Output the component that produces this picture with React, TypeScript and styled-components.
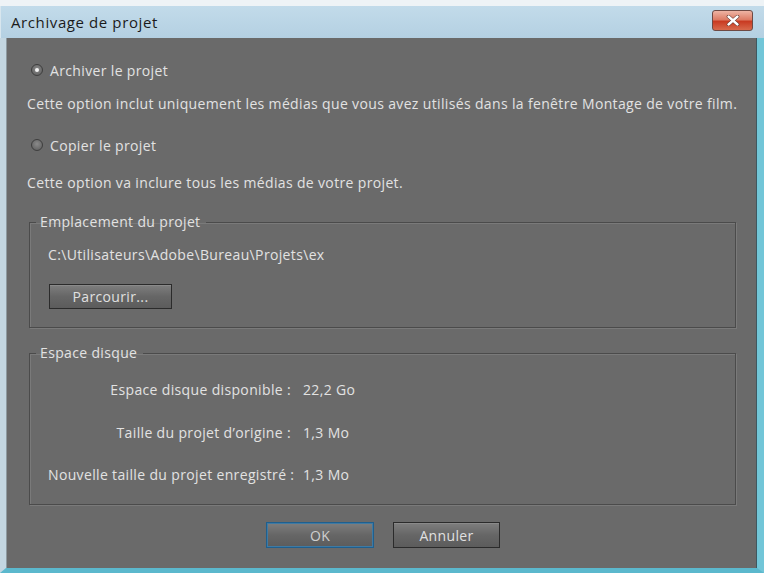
import React from 'react';
import styled, { createGlobalStyle } from 'styled-components';

const GlobalStyle = createGlobalStyle`
  html, body {
    margin: 0;
    padding: 0;
    background: #f2f5f7;
  }
  body {
    font-family: "Open Sans", "Noto Sans", sans-serif;
  }
`;

const Window = styled.div`
  width: 764px;
  height: 573px;
  display: flex;
  flex-direction: column;
  box-sizing: border-box;
  padding-top: 6px;
  background: #eef3f6;
`;

const TitleBar = styled.div`
  height: 32px;
  display: flex;
  align-items: center;
  justify-content: space-between;
  padding: 0 11px 0 10px;
  background: linear-gradient(#c2dbea, #b4d0e2);
  border-left: 1px solid #d8e6ee;
`;

const Title = styled.div`
  font-size: 15px;
  color: #1b1b1b;
  letter-spacing: 0.6px;
`;

const CloseButton = styled.div`
  width: 41px;
  height: 21px;
  box-sizing: border-box;
  border: 1px solid #6e4a44;
  border-radius: 3px;
  background: linear-gradient(#eeb4a4 0%, #dd7d66 45%, #c93b22 55%, #d86a4c 100%);
  display: flex;
  align-items: center;
  justify-content: center;
  margin-top: -4px;
`;

const Body = styled.div`
  flex: 1;
  display: flex;
  flex-direction: column;
  background: #6a6a6a;
  border-left: 6px solid #c3d6e1;
  border-right: 7px solid #72c6d8;
  border-bottom: 5px solid #5bb8cd;
  box-shadow: inset 1px 0 0 #8e9aa0, inset -1px 0 0 #3f5860;
  padding-left: 21px;
  color: #e2e2e2;
  font-size: 14px;
  letter-spacing: 0.35px;
`;

const RadioRow = styled.label<{ $top: number }>`
  display: flex;
  align-items: center;
  gap: 7px;
  height: 20px;
  margin-top: ${p => p.$top}px;
  margin-left: 4px;
`;

const RadioDot = styled.span<{ $checked?: boolean }>`
  width: 12px;
  height: 12px;
  box-sizing: border-box;
  border-radius: 50%;
  border: 1px solid #3e3e3e;
  background: radial-gradient(circle at 50% 40%, #8a8a8a, #5a5a5a);
  display: flex;
  align-items: center;
  justify-content: center;
  &::after {
    content: '';
    display: ${p => (p.$checked ? 'block' : 'none')};
    width: 4px;
    height: 4px;
    border-radius: 50%;
    background: #f4f4f4;
  }
`;

const Text = styled.div<{ $top: number }>`
  height: 20px;
  line-height: 20px;
  margin-top: ${p => p.$top}px;
  white-space: nowrap;
`;

const Group = styled.fieldset<{ $top: number; $bottom: number }>`
  width: 707px;
  box-sizing: border-box;
  margin: ${p => p.$top}px 0 0 2px;
  padding: 0 18px ${p => p.$bottom}px 18px;
  border: 1px solid #4b4b4b;
  box-shadow: 1px 1px 0 #7a7a7a, inset 1px 1px 0 #7a7a7a;
  min-width: 0;
`;

const Legend = styled.legend`
  height: 20px;
  line-height: 20px;
  padding: 0 6px 0 4px;
  margin-left: -12px;
  color: #e2e2e2;
`;

const PathText = styled.div`
  margin-top: 13px;
  height: 20px;
  line-height: 20px;
`;

const Button = styled.button<{ $focused?: boolean; $width: number; $height: number }>`
  width: ${p => p.$width}px;
  height: ${p => p.$height}px;
  box-sizing: border-box;
  border: 1px solid ${p => (p.$focused ? '#1f5f8e' : '#2b2b2b')};
  box-shadow: ${p => (p.$focused ? 'inset 0 0 0 1px #3f7aa3' : 'inset 0 1px 0 #8a8a8a')};
  background: linear-gradient(#7e7e7e, #666 50%, #5c5c5c);
  color: ${p => (p.$focused ? '#cfcfcf' : '#e0e0e0')};
  font-family: "Open Sans", "Noto Sans", sans-serif;
  font-size: 14px;
  letter-spacing: 0.35px;
  padding: 0;
  cursor: default;
`;

const BrowseButton = styled(Button)`
  margin-top: 19px;
  margin-left: 1px;
`;

const StatsGrid = styled.div`
  display: grid;
  grid-template-columns: 243px auto;
  column-gap: 12px;
  row-gap: 22.5px;
  margin-top: 17px;
`;

const StatLabel = styled.div`
  text-align: right;
  height: 20px;
  line-height: 20px;
  white-space: nowrap;
`;

const StatValue = styled.div`
  height: 20px;
  line-height: 20px;
`;

const Footer = styled.div`
  display: flex;
  gap: 19px;
  margin-top: 17px;
  margin-left: 239px;
`;

const stats = [
  ['Espace disque disponible :', '22,2 Go'],
  ["Taille du projet d’origine :", '1,3 Mo'],
  ['Nouvelle taille du projet enregistré :', '1,3 Mo'],
];

export default function App() {
  return (
    <>
      <GlobalStyle />
      <Window>
        <TitleBar>
          <Title>Archivage de projet</Title>
          <CloseButton>
            <svg width="14" height="11" viewBox="0 0 14 11">
              <path d="M2.5 1.5 L11.5 9.5 M11.5 1.5 L2.5 9.5" stroke="#5a2a22" strokeWidth="3.6" strokeLinecap="round" />
              <path d="M2.5 1.5 L11.5 9.5 M11.5 1.5 L2.5 9.5" stroke="#fff" strokeWidth="2.4" strokeLinecap="round" />
            </svg>
          </CloseButton>
        </TitleBar>
        <Body>
          <RadioRow $top={22}>
            <RadioDot $checked />
            Archiver le projet
          </RadioRow>
          <Text $top={14}>
            Cette option inclut uniquement les médias que vous avez utilisés dans la fenêtre Montage de votre film.
          </Text>
          <RadioRow $top={21}>
            <RadioDot />
            Copier le projet
          </RadioRow>
          <Text $top={18}>Cette option va inclure tous les médias de votre projet.</Text>

          <Group $top={19} $bottom={18}>
            <Legend>Emplacement du projet</Legend>
            <PathText>C:\Utilisateurs\Adobe\Bureau\Projets\ex</PathText>
            <BrowseButton $width={123} $height={25}>Parcourir...</BrowseButton>
          </Group>

          <Group $top={15} $bottom={19}>
            <Legend>Espace disque</Legend>
            <StatsGrid>
              {stats.map(([label, value]) => (
                <React.Fragment key={label}>
                  <StatLabel>{label}</StatLabel>
                  <StatValue>{value}</StatValue>
                </React.Fragment>
              ))}
            </StatsGrid>
          </Group>

          <Footer>
            <Button $focused $width={108} $height={26}>OK</Button>
            <Button $width={107} $height={26}>Annuler</Button>
          </Footer>
        </Body>
      </Window>
    </>
  );
}
